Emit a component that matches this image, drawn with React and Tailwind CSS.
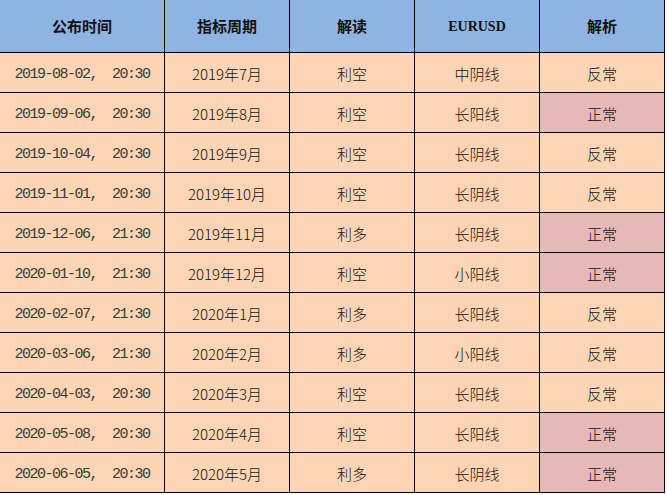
import React from 'react';

// 数据行：pink 表示“正常”单元格高亮
const rows = [
  ['2019-08-02', '20:30', '2019年7月', '利空', '中阴线', '反常'],
  ['2019-09-06', '20:30', '2019年8月', '利空', '长阳线', '正常'],
  ['2019-10-04', '20:30', '2019年9月', '利空', '长阴线', '反常'],
  ['2019-11-01', '20:30', '2019年10月', '利空', '长阴线', '反常'],
  ['2019-12-06', '21:30', '2019年11月', '利多', '长阴线', '正常'],
  ['2020-01-10', '21:30', '2019年12月', '利空', '小阳线', '正常'],
  ['2020-02-07', '21:30', '2020年1月', '利多', '长阳线', '反常'],
  ['2020-03-06', '21:30', '2020年2月', '利多', '小阳线', '反常'],
  ['2020-04-03', '20:30', '2020年3月', '利空', '长阳线', '反常'],
  ['2020-05-08', '20:30', '2020年4月', '利空', '长阳线', '正常'],
  ['2020-06-05', '20:30', '2020年5月', '利多', '长阴线', '正常'],
];

const cjk = "font-['Noto_Sans_CJK_SC',sans-serif]";
const cell = 'flex items-center justify-center border-r border-b border-black';

const App = () => {
  return (
    <div className="w-[667px] h-[495px] bg-white overflow-hidden">
      <div className="grid grid-cols-[165px_125px_125px_125px_125px] w-[665px] text-[#111]">
        {/* Header */}
        <div className={`${cell} h-[53px] bg-[#8db4e2] ${cjk} font-bold text-[15px]`}>公布时间</div>
        <div className={`${cell} h-[53px] bg-[#8db4e2] ${cjk} font-bold text-[15px]`}>指标周期</div>
        <div className={`${cell} h-[53px] bg-[#8db4e2] ${cjk} font-bold text-[15px]`}>解读</div>
        <div className={`${cell} h-[53px] bg-[#8db4e2] font-['Liberation_Serif',serif] font-bold text-[14px]`}>EURUSD</div>
        <div className={`${cell} h-[53px] bg-[#8db4e2] ${cjk} font-bold text-[15px]`}>解析</div>

        {rows.map((r) => (
          <React.Fragment key={r[0]}>
            <div className={`${cell} h-[40px] pt-[5px] bg-[#fcd5b4] font-['Liberation_Mono',monospace] text-[15px] tracking-[-1.5px] whitespace-pre text-[#3a3a3a]`}>
              {`${r[0]},  ${r[1]}`}
            </div>
            <div className={`${cell} h-[40px] pt-[3px] bg-[#fcd5b4] ${cjk} font-light text-[15px]`}>{r[2]}</div>
            <div className={`${cell} h-[40px] pt-[3px] bg-[#fcd5b4] ${cjk} font-light text-[15px]`}>{r[3]}</div>
            <div className={`${cell} h-[40px] pt-[3px] bg-[#fcd5b4] ${cjk} font-light text-[15px]`}>{r[4]}</div>
            <div className={`${cell} h-[40px] pt-[3px] ${r[5] === '正常' ? 'bg-[#e6b8b7]' : 'bg-[#fcd5b4]'} ${cjk} font-light text-[15px]`}>
              {r[5]}
            </div>
          </React.Fragment>
        ))}
      </div>
    </div>
  );
};

export default App;
